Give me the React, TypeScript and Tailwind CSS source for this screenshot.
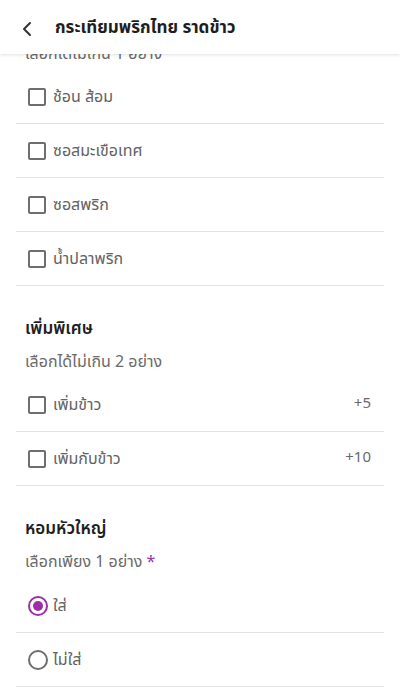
import React from 'react';

const font = { fontFamily: '"Noto Sans Thai", "Noto Sans", "Liberation Sans", sans-serif' };

type Opt = { label: string; price?: string; checked?: boolean };

function CheckRow({ opt }: { opt: Opt }) {
  return (
    <div className="flex items-center h-[54px] border-b border-[#e2e2e2] pl-3 pr-[13px]">
      <span className="w-[18px] h-[18px] border-2 border-[#6e6e6e] rounded-[2px] shrink-0" />
      <span className="ml-[7px] text-[16px] text-[#626262] flex-1">{opt.label}</span>
      {opt.price && <span className="text-[15px] text-[#6a6a6a]">{opt.price}</span>}
    </div>
  );
}

function RadioRow({ opt }: { opt: Opt }) {
  return (
    <div className="flex items-center h-[54px] border-b border-[#e2e2e2] pl-3">
      <span
        className={
          opt.checked
            ? 'w-[20px] h-[20px] rounded-full border-2 border-[#9c2fa8] flex items-center justify-center shrink-0'
            : 'w-[20px] h-[20px] rounded-full border-2 border-[#6e6e6e] shrink-0'
        }
      >
        {opt.checked && <span className="w-[10px] h-[10px] rounded-full bg-[#9c2fa8]" />}
      </span>
      <span className="ml-[5px] text-[16px] text-[#626262]">{opt.label}</span>
    </div>
  );
}

export default function App() {
  const sauces: Opt[] = [
    { label: 'ช้อน ส้อม' },
    { label: 'ซอสมะเขือเทศ' },
    { label: 'ซอสพริก' },
    { label: 'น้ำปลาพริก' },
  ];
  const extras: Opt[] = [
    { label: 'เพิ่มข้าว', price: '+5' },
    { label: 'เพิ่มกับข้าว', price: '+10' },
  ];
  const onion: Opt[] = [{ label: 'ใส่', checked: true }, { label: 'ไม่ใส่' }];

  return (
    <div className="w-[400px] h-[699px] overflow-hidden bg-white" style={font}>
      {/* header */}
      <div className="relative z-10 h-[54px] pt-[3px] bg-white flex items-center shadow-[0_1px_3px_rgba(0,0,0,0.12)]">
        <svg width="24" height="24" viewBox="0 0 24 24" className="ml-[15px]" fill="none" stroke="#333" strokeWidth="2" strokeLinecap="round" strokeLinejoin="round">
          <path d="M15 6l-6 6 6 6" />
        </svg>
        <h1 className="ml-[16px] text-[17px] font-bold text-[#1e1e1e]">กระเทียมพริกไทย ราดข้าว</h1>
      </div>

      <div className="px-4">
        {/* scrolled section, its subtitle tucked under the header */}
        <p className="-mt-[12px] h-[28px] text-[16px] text-[#6a6a6a] pl-[9px]">เลือกได้ไม่เกิน 1 อย่าง</p>
        <div>
          {sauces.map((o) => (
            <CheckRow key={o.label} opt={o} />
          ))}
        </div>

        <h2 className="mt-[29px] pl-[9px] text-[17px] font-semibold text-[#1e1e1e] leading-[28px]">เพิ่มพิเศษ</h2>
        <p className="mt-[7px] pl-[9px] text-[16px] text-[#6a6a6a] leading-[24px]">เลือกได้ไม่เกิน 2 อย่าง</p>
        <div className="mt-[4px]">
          {extras.map((o) => (
            <CheckRow key={o.label} opt={o} />
          ))}
        </div>

        <h2 className="mt-[29px] pl-[9px] text-[17px] font-semibold text-[#1e1e1e] leading-[28px]">หอมหัวใหญ่</h2>
        <p className="mt-[7px] pl-[9px] text-[16px] text-[#6a6a6a] leading-[24px]">
          เลือกเพียง 1 อย่าง <span className="text-[#9c2fa8]">*</span>
        </p>
        <div className="mt-[5px]">
          {onion.map((o) => (
            <RadioRow key={o.label} opt={o} />
          ))}
        </div>
      </div>
    </div>
  );
}
